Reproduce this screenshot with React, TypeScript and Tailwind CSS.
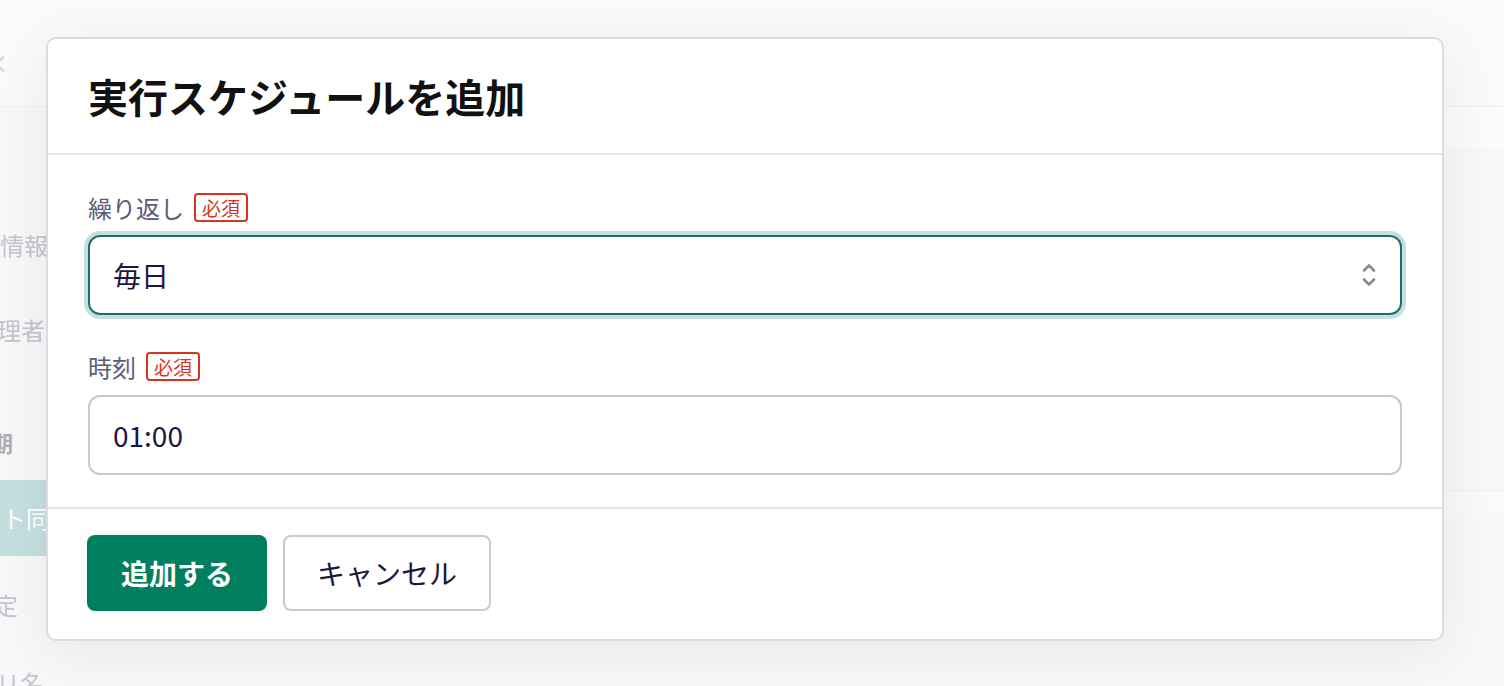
import React from "react";
import { ChevronLeft } from "lucide-react";

const font = "font-['Noto_Sans_CJK_JP','Noto_Sans',sans-serif]";

const RequiredBadge = () => (
  <span className="flex h-[29px] items-center rounded-[4px] border-2 border-[#d8361c] px-[6px] text-[19px] leading-none text-[#d8361c]">
    必須
  </span>
);

const FieldLabel = ({ children }: { children: React.ReactNode }) => (
  <div className="flex h-[29px] items-center gap-[10px]">
    <span className="text-[24px] leading-none text-[#5c5b79]">{children}</span>
    <RequiredBadge />
  </div>
);

const UpDown = () => (
  <svg width="14" height="26" viewBox="0 0 14 26" fill="none" stroke="#8a8a8e" strokeWidth="2.6" strokeLinecap="round" strokeLinejoin="round">
    <path d="M2 8.5 L7 3.5 L12 8.5" />
    <path d="M2 17.5 L7 22.5 L12 17.5" />
  </svg>
);

// faded sidebar behind the dialog; rows keep their heights (no shrinking)
const Sidebar = () => (
  <div className="flex h-full w-[250px] shrink-0 flex-col overflow-hidden text-[24px] text-[#c5c4d1]">
    <div className="h-[107px] shrink-0 border-b border-[#efeff1] bg-[#fafafa] pt-[50px]">
      <ChevronLeft className="-ml-[14px]" size={28} strokeWidth={1.5} color="#c9c9d2" />
    </div>
    <div className="h-[116px] shrink-0" />
    <div className="flex h-[44px] shrink-0 items-center">情報</div>
    <div className="h-[41px] shrink-0" />
    <div className="-ml-[3px] flex h-[44px] shrink-0 items-center">理者</div>
    <div className="h-[73px] shrink-0" />
    <div className="-ml-[9px] flex h-[34px] shrink-0 items-center text-[22px] font-bold text-[#aeadb5]">期</div>
    <div className="h-[21px] shrink-0" />
    <div className="flex h-[76px] shrink-0 items-center bg-[#c5dfe0] pl-[2px] text-white">ト同</div>
    <div className="h-[29px] shrink-0" />
    <div className="-ml-[6px] flex h-[40px] shrink-0 items-center">定</div>
    <div className="h-[38px] shrink-0" />
    <div className="-ml-[4px] flex h-[40px] shrink-0 items-center">リ名</div>
  </div>
);

const Backdrop = () => (
  <div className="flex h-full w-full bg-[#f8f8f9]">
    <Sidebar />
    <div className="flex flex-1 flex-col">
      <div className="h-[107px] border-b border-[#efeff1] bg-[#fafafa]" />
      <div className="h-[41px] bg-[#fbfbfb]" />
      <div className="h-[343px] border-b border-[#f0f0f2] bg-[#f8f8f9]" />
      <div className="h-[25px] bg-[#fafafa]" />
      <div className="flex-1 bg-[#f8f8f9]" />
    </div>
  </div>
);

const ScheduleDialog = () => (
  <div className="absolute left-[46px] top-[37px] w-[1398px] rounded-[10px] border-2 border-[#dcdcde] bg-white shadow-[0_12px_60px_rgba(0,0,0,0.07)]">
    <div className="flex h-[116px] items-center border-b-2 border-[#e3e5e8] px-[40px]">
      <h2 className="text-[40px] font-bold leading-none text-[#111111]">実行スケジュールを追加</h2>
    </div>
    <div className="flex flex-col px-[40px] pb-[32px] pt-[38px]">
      <FieldLabel>繰り返し</FieldLabel>
      <div className="mt-[13px] flex h-[80px] items-center justify-between rounded-[12px] border-2 border-[#1f6b6e] pl-[23px] pr-[24px] shadow-[0_0_0_4px_#c3dfe0]">
        <span className="text-[28px] leading-none text-[#1b1642]">毎日</span>
        <UpDown />
      </div>
      <div className="mt-[37px]">
        <FieldLabel>時刻</FieldLabel>
      </div>
      <div className="mt-[14px] flex h-[80px] items-center rounded-[12px] border-2 border-[#c8cace] pl-[23px]">
        <span className="text-[28px] leading-none text-[#1b1642]">01:00</span>
      </div>
    </div>
    <div className="flex gap-[16px] border-t-2 border-[#e3e5e8] px-[39px] pb-[28px] pt-[26px]">
      <button className="h-[76px] rounded-[8px] bg-[#007f5f] px-[34px] text-[28px] font-bold text-white">
        追加する
      </button>
      <button className="h-[76px] rounded-[8px] border-2 border-[#c8cace] bg-white px-[32px] text-[28px] text-[#1b1642]">
        キャンセル
      </button>
    </div>
  </div>
);

export default function App() {
  return (
    <div className={`relative h-[686px] w-[1504px] overflow-hidden ${font}`}>
      <Backdrop />
      <ScheduleDialog />
    </div>
  );
}
